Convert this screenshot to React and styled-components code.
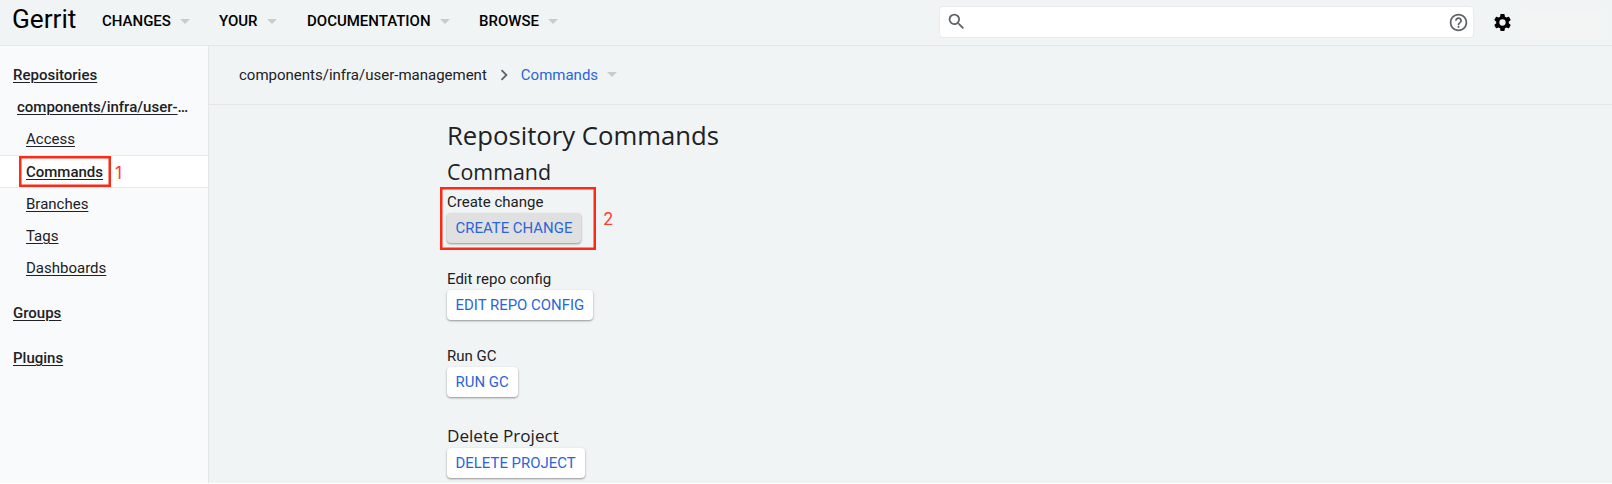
import React from 'react';
import styled, { createGlobalStyle, css } from 'styled-components';

const GlobalStyle = createGlobalStyle`
  * { box-sizing: border-box; }
  body {
    margin: 0;
    background: #f0f4f5;
    color: #202124;
    font-family: Roboto, "Liberation Sans", sans-serif;
    font-size: 15px;
    overflow: hidden;
  }
`;

const Page = styled.div`
  display: flex;
  flex-direction: column;
  height: 484px;
  overflow: hidden;
  background: #f0f4f5;
  border-bottom: 1px solid #fff;
`;

const Header = styled.header`
  display: flex;
  align-items: center;
  flex: none;
  height: 46px;
  padding-left: 12px;
  border-bottom: 1px solid #e4e6e8;
`;

const Brand = styled.div`
  width: 90px;
  padding-bottom: 8px;
  color: #000;
  font-size: 26.2px;
  line-height: 32px;
  white-space: nowrap;
`;

const MenuItem = styled.div`
  display: flex;
  align-items: center;
  flex: none;
  width: ${(p) => p.$width}px;
  padding-bottom: 3px;
  color: #000;
  font-weight: 500;
  line-height: 20px;
  white-space: nowrap;
`;

const Caret = styled.span`
  margin-left: 9px;
  border: 5px solid transparent;
  border-top-color: #c9cbcc;
  border-bottom: 0;
`;

const SearchBox = styled.div`
  display: flex;
  align-items: center;
  justify-content: space-between;
  width: 535px;
  height: 32px;
  margin-left: auto;
  margin-right: 18px;
  margin-bottom: 2px;
  padding: 0 4px 0 6px;
  background: #fff;
  border: 1px solid #e8eaeb;
  border-radius: 4px;
  color: #5f6368;
`;

const Icon = styled.svg`
  display: block;
  flex: none;
  width: ${(p) => p.$size}px;
  height: ${(p) => p.$size}px;
  margin-top: ${(p) => p.$drop || 0}px;
  fill: currentColor;
`;

const AccountArea = styled.div`
  width: 80px;
  height: 30px;
  margin: 5px 11px 0 8px;
  background: #f3f4f4;
`;

const Body = styled.div`
  display: flex;
  flex: 1;
  min-height: 0;
`;

const Sidebar = styled.nav`
  flex: none;
  width: 209px;
  padding-top: 13px;
  background: #f9fafc;
  border-right: 1px solid #e4e6e8;
`;

const NavRow = styled.div`
  display: flex;
  align-items: center;
  height: ${(p) => (p.$selected ? 33 : 32)}px;
  margin-top: ${(p) => p.$gap || 0}px;
  padding-left: ${(p) => p.$indent}px;
  font-weight: ${(p) => (p.$strong ? 500 : 400)};
  line-height: 20px;
  ${(p) => p.$selected && css`
    background: #fff;
    border: solid #e8eaec;
    border-width: 1px 0;
  `}
`;

const NavLink = styled.a`
  white-space: nowrap;
  text-decoration: underline;
  text-underline-offset: 2px;
  text-decoration-thickness: 1px;
`;

const Marked = styled.span`
  position: relative;
  display: block;
`;

const Outline = styled.span`
  position: absolute;
  left: ${(p) => p.$left}px;
  top: ${(p) => p.$top}px;
  width: ${(p) => p.$width}px;
  height: ${(p) => p.$height}px;
  box-shadow: inset 0 0 0 2.5px #fa2a17;
`;

const Step = styled.span`
  position: absolute;
  left: ${(p) => p.$left}px;
  top: ${(p) => p.$top}px;
  color: #ff3b30;
  font-family: Inter, sans-serif;
  font-size: 17px;
  font-weight: 400;
  line-height: 20px;
`;

const Main = styled.main`
  flex: 1;
  min-width: 0;
`;

const Breadcrumbs = styled.div`
  display: flex;
  align-items: center;
  height: 59px;
  padding-left: 30px;
  padding-bottom: 1px;
  border-bottom: 1px solid #e4e6e8;
`;

const Crumb = styled.span`
  color: ${(p) => (p.$current ? '#2a66d9' : 'inherit')};
  line-height: 20px;
`;

const Chevron = styled(Icon)`
  margin: 1px 6px 0 6px;
  color: #5f6368;
`;

const Commands = styled.section`
  padding: 13px 0 0 238px;
`;

const Title = styled.h1`
  margin: 0;
  font: 400 25.7px/36px "Open Sans", sans-serif;
`;

const Subtitle = styled.h2`
  margin: 0 0 1px;
  font: 400 21.4px/36px "Open Sans", sans-serif;
`;

const Command = styled.div`
  position: relative;
  height: ${(p) => p.$height || 77}px;
`;

const Label = styled.h3`
  margin: 0;
  padding-top: 1px;
  font-family: ${(p) => (p.$large ? '"Open Sans", sans-serif' : 'inherit')};
  font-size: ${(p) => (p.$large ? 17.1 : 15)}px;
  font-weight: 400;
  line-height: ${(p) => (p.$large ? 24 : 21)}px;
`;

const Button = styled.button`
  display: block;
  height: 30px;
  padding: 0 9px 0 8.5px;
  background: ${(p) => (p.$active ? '#e0e0e0' : '#fff')};
  border: 0;
  border-radius: 4px;
  box-shadow: 0 1px 2px rgba(0, 0, 0, 0.32), 0 1px 3px rgba(0, 0, 0, 0.1);
  color: #2a66d9;
  font: 400 14.95px/29px Roboto, sans-serif;
  white-space: nowrap;
`;

const menus = [
  ['CHANGES', 117],
  ['YOUR', 88],
  ['DOCUMENTATION', 172],
  ['BROWSE', 90],
];

export default function App() {
  return (
    <>
      <GlobalStyle />
      <Page>
        <Header>
          <Brand>Gerrit</Brand>
          {menus.map(([name, width]) => (
            <MenuItem key={name} $width={width}>{name}<Caret /></MenuItem>
          ))}
          <SearchBox>
            <Icon $size={21} viewBox="0 0 24 24">
              <path d="M15.5 14h-.79l-.28-.27A6.471 6.471 0 0 0 16 9.5 6.5 6.5 0 1 0 9.5 16c1.61 0 3.09-.59 4.23-1.57l.27.28v.79l5 4.99L20.49 19l-4.99-5zm-6 0C7.01 14 5 11.99 5 9.5S7.01 5 9.5 5 14 7.01 14 9.5 11.99 14 9.5 14z" />
            </Icon>
            <Icon $size={21} $drop={1} viewBox="0 0 24 24">
              <path d="M11 18h2v-2h-2v2zm1-16C6.48 2 2 6.48 2 12s4.48 10 10 10 10-4.48 10-10S17.52 2 12 2zm0 18c-4.41 0-8-3.59-8-8s3.59-8 8-8 8 3.59 8 8-3.59 8-8 8zm0-14c-2.21 0-4 1.79-4 4h2c0-1.1.9-2 2-2s2 .9 2 2c0 2-3 1.75-3 5h2c0-2.25 3-2.5 3-5 0-2.21-1.79-4-4-4z" />
            </Icon>
          </SearchBox>
          <Icon $size={21} viewBox="0 0 24 24" color="#000">
            <path d="M19.14 12.94c.04-.3.06-.61.06-.94 0-.32-.02-.64-.07-.94l2.03-1.58a.49.49 0 0 0 .12-.61l-1.92-3.32a.488.488 0 0 0-.59-.22l-2.39.96c-.5-.38-1.03-.7-1.62-.94l-.36-2.54a.484.484 0 0 0-.48-.41h-3.84c-.24 0-.43.17-.47.41l-.36 2.54c-.59.24-1.13.57-1.62.94l-2.39-.96c-.22-.08-.47 0-.59.22L2.74 8.87c-.12.21-.08.47.12.61l2.03 1.58c-.05.3-.09.63-.09.94s.02.64.07.94l-2.03 1.58a.49.49 0 0 0-.12.61l1.92 3.32c.12.22.37.29.59.22l2.39-.96c.5.38 1.03.7 1.62.94l.36 2.54c.05.24.24.41.48.41h3.84c.24 0 .44-.17.47-.41l.36-2.54c.59-.24 1.13-.56 1.62-.94l2.39.96c.22.08.47 0 .59-.22l1.92-3.32c.12-.22.07-.47-.12-.61l-2.01-1.58zM12 15.6A3.6 3.6 0 1 1 12 8.4a3.6 3.6 0 0 1 0 7.2z" />
          </Icon>
          <AccountArea />
        </Header>
        <Body>
          <Sidebar>
            <NavRow $indent={13} $strong><NavLink>Repositories</NavLink></NavRow>
            <NavRow $indent={17} $strong><NavLink>components/infra/user-</NavLink>…</NavRow>
            <NavRow $indent={26}><NavLink>Access</NavLink></NavRow>
            <NavRow $indent={26} $strong $selected>
              <Marked>
                <NavLink>Commands</NavLink>
                <Outline $left={-7} $top={-6} $width={92} $height={31} />
                <Step $left={89} $top={1}>1</Step>
              </Marked>
            </NavRow>
            <NavRow $indent={26}><NavLink>Branches</NavLink></NavRow>
            <NavRow $indent={26}><NavLink>Tags</NavLink></NavRow>
            <NavRow $indent={26}><NavLink>Dashboards</NavLink></NavRow>
            <NavRow $indent={13} $gap={13} $strong><NavLink>Groups</NavLink></NavRow>
            <NavRow $indent={13} $gap={13} $strong><NavLink>Plugins</NavLink></NavRow>
          </Sidebar>
          <Main>
            <Breadcrumbs>
              <Crumb>components/infra/user-management</Crumb>
              <Chevron $size={22} viewBox="0 0 24 24">
                <path d="M10 6 8.59 7.41 13.17 12l-4.58 4.59L10 18l6-6z" />
              </Chevron>
              <Crumb $current>Commands</Crumb>
              <Caret />
            </Breadcrumbs>
            <Commands>
              <Title>Repository Commands</Title>
              <Subtitle>Command</Subtitle>
              <Command>
                <Label>Create change</Label>
                <Button $active>CREATE CHANGE</Button>
                <Outline $left={-7} $top={-4} $width={156} $height={63} />
                <Step $left={156} $top={18}>2</Step>
              </Command>
              <Command>
                <Label>Edit repo config</Label>
                <Button>EDIT REPO CONFIG</Button>
              </Command>
              <Command $height={78}>
                <Label>Run GC</Label>
                <Button>RUN GC</Button>
              </Command>
              <Command $height={60}>
                <Label $large>Delete Project</Label>
                <Button>DELETE PROJECT</Button>
              </Command>
            </Commands>
          </Main>
        </Body>
      </Page>
    </>
  );
}
